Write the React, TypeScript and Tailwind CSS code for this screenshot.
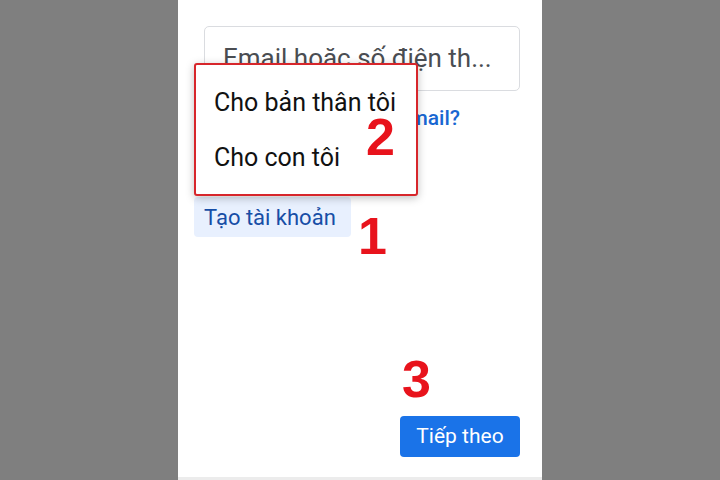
export default function App() {
  return (
    <div className="w-[720px] h-[480px] bg-[#7f7f7f] flex justify-center" style={{ fontFamily: "Roboto, 'Noto Sans', sans-serif" }}>
      <div className="w-[364px] h-full flex flex-col">
        <div className="relative flex-1 bg-white flex flex-col px-[16px] pt-[26px] pb-[20px]">
          {/* Email input */}
          <div className="ml-[10px] w-[316px] h-[65px] border border-[#dadce0] rounded-[5px] flex items-center px-[18px]">
            <span className="text-[26px] text-[#4a4d52] whitespace-nowrap">Email hoặc số điện th...</span>
          </div>

          <div className="self-end mr-[66px] mt-[13px] text-[21px] leading-[28px] font-medium text-[#1967d2] whitespace-nowrap">
            Bạn quên địa chỉ email?
          </div>

          <div className="mt-[65px] self-start h-[40px] w-[157px] rounded-[4px] bg-[#e8f0fe] flex items-center pl-[10px]">
            <span className="text-[22px] text-[#174ea6] whitespace-nowrap">Tạo tài khoản</span>
          </div>

          <button className="mt-auto self-end mr-[6px] w-[120px] h-[41px] rounded-[4px] bg-[#1a73e8] text-white text-[21px]">
            Tiếp theo
          </button>

          {/* Dropdown menu */}
          <div className="absolute left-[16px] top-[63px] w-[224px] h-[133px] bg-white border-2 border-[#d7262b] rounded-[3px] shadow-[0_2px_8px_rgba(0,0,0,0.25)] pt-[10px]">
            <div className="h-[55px] flex items-center pl-[18px] text-[25px] text-[#111] whitespace-nowrap">Cho bản thân tôi</div>
            <div className="h-[55px] flex items-center pl-[18px] text-[25px] text-[#111] whitespace-nowrap">Cho con tôi</div>
          </div>

          {/* Step annotations */}
          <span className="absolute left-[188px] top-[111px] text-[52px] leading-none font-bold text-[#e8131c]" style={{ fontFamily: "'Liberation Sans', sans-serif" }}>2</span>
          <span className="absolute left-[180px] top-[210px] text-[52px] leading-none font-bold text-[#e8131c]" style={{ fontFamily: "'Liberation Sans', sans-serif" }}>1</span>
          <span className="absolute left-[224px] top-[353px] text-[52px] leading-none font-bold text-[#e8131c]" style={{ fontFamily: "'Liberation Sans', sans-serif" }}>3</span>
        </div>
        <div className="h-[3px] bg-[#ececec]" />
      </div>
    </div>
  );
}
